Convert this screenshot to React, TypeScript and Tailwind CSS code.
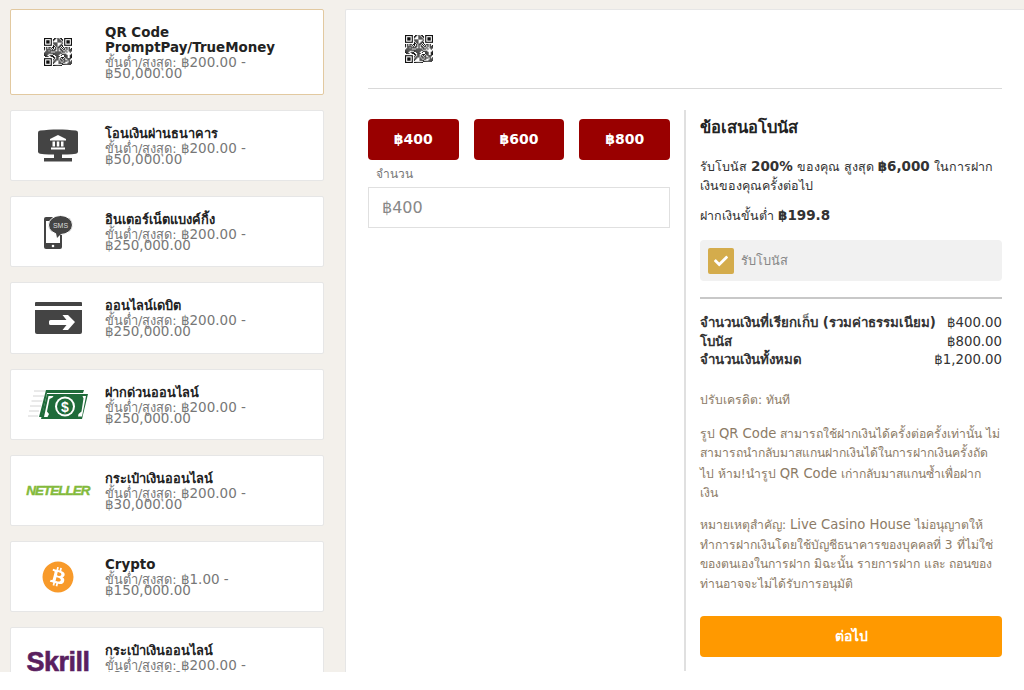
import { FaBitcoin, FaCheck } from "react-icons/fa";

const font = "[font-family:'DejaVu_Sans','Noto_Sans',sans-serif]";

// fixed 25x25 pattern, finder squares get drawn over it
const QrCode = ({ size = 28 }: { size?: number }) => {
  const cells: [number, number][] = [];
  for (let y = 0; y < 25; y++) {
    for (let x = 0; x < 25; x++) {
      const inFinder = (x < 8 && y < 8) || (x > 16 && y < 8) || (x < 8 && y > 16);
      if (inFinder) continue;
      if ((x * 7 + y * 13 + x * y * 3 + (x ^ y)) % 5 < 3) cells.push([x, y]);
    }
  }
  const finder = (x: number, y: number) => (
    <g key={`${x}-${y}`}>
      <rect x={x + 0.5} y={y + 0.5} width="6" height="6" fill="none" stroke="#111" />
      <rect x={x + 2} y={y + 2} width="3" height="3" fill="#111" />
    </g>
  );
  return (
    <svg width={size} height={size} viewBox="0 0 25 25">
      {cells.map(([x, y]) => (
        <rect key={`${x}:${y}`} x={x} y={y} width="1" height="1" fill="#111" />
      ))}
      {finder(0, 0)}
      {finder(18, 0)}
      {finder(0, 18)}
    </svg>
  );
};

const BankIcon = () => (
  <svg width="40" height="33" viewBox="0 0 40 33">
    <path d="M2 1.500c11-1.500 25-1.500 36 0q2 .3 2 2v19q0 2-2 2.300c-11 1.200-25 1.200-36 0q-2-.3-2-2.300v-19q0-1.700 2-2z" fill="#444" />
    <path d="M16 25h8v4h-8z" fill="#444" />
    <path d="M6 29h28v3.500h-28z" fill="#444" />
    <path d="M20 6l8 4v1.500h-16v-1.500z M13 18.500h14v2h-14z M14.500 12.500h2.500v5h-2.500z M18.800 12.500h2.500v5h-2.500z M23 12.500h2.500v5h-2.500z" fill="#fff" />
  </svg>
);

const SmsIcon = () => (
  <svg width="30" height="34" viewBox="0 0 30 34">
    <rect x="1" y="2" width="18" height="32" rx="2" fill="#444" />
    <rect x="3" y="6" width="14" height="22" fill="#fff" />
    <circle cx="10" cy="31" r="1.300" fill="#fff" />
    <ellipse cx="17.500" cy="10" rx="12" ry="9.500" fill="#444" stroke="#fff" strokeWidth="1" />
    <path d="M13 18l1 5 5-5z" fill="#444" />
    <text x="17.500" y="12.500" textAnchor="middle" fontSize="7" fill="#ddd" fontFamily="Liberation Sans">SMS</text>
  </svg>
);

const DebitIcon = () => (
  <svg width="47" height="32" viewBox="0 0 47 32">
    <path d="M1 0h45a1 1 0 0 1 1 1v3h-47v-3a1 1 0 0 1 1-1z" fill="#444" />
    <path d="M0 8h47v22a2 2 0 0 1-2 2h-43a2 2 0 0 1-2-2z" fill="#444" />
    <path d="M14 19.500a1.500 1.500 0 0 1 1.500-1.500h16l-4-5h5.500l7 7-7 8h-5.500l4-5h-16a1.500 1.500 0 0 1-1.500-1.500z" fill="#fff" />
  </svg>
);

const CashIcon = () => (
  <svg width="60" height="29" viewBox="0 0 60 29">
    <path d="M6 1h12M5 6h11M3.500 11h11M2 16h11M1 21h10M0 26h10" stroke="#d4d4d4" strokeWidth="1" />
    <path d="M18 0h38l-1 3h-36l-5 24h-3z" fill="#1f6b3a" />
    <path d="M19 4h41l-6 25h-41z" fill="#1f6b3a" />
    <path d="M20.500 6h5l-1 1.500-3 1.500-2.500 12.500 2 2.500-1.500 3h-3.500z" fill="#fff" />
    <path d="M58 6h-3.500l1 2.500 0 0-2 13-3 2.500-.5 2.500h4z" fill="#fff" />
    <circle cx="37" cy="16.500" r="10" fill="#fff" />
    <circle cx="37" cy="16.500" r="8" fill="#1f6b3a" />
    <text x="37" y="21.500" textAnchor="middle" fontSize="14" fontWeight="bold" fill="#fff" fontFamily="Liberation Sans">$</text>
  </svg>
);

const BitcoinIcon = () => (
  <div className="relative w-[32px] h-[32px] rounded-full bg-white">
    <FaBitcoin className="absolute inset-0 text-[#f89a2a]" size={32} />
  </div>
);

const NetellerLogo = () => (
  <span className="text-[13.500px] leading-none font-bold italic tracking-[-1px] text-[#83ba3b] [-webkit-text-stroke:0.4px_#83ba3b] [font-family:'Liberation_Sans',sans-serif]">
    NETELLER
  </span>
);

const SkrillLogo = () => (
  <span className="text-[27px] leading-none font-bold tracking-[-0.5px] text-[#5a1f5f] [-webkit-text-stroke:0.6px_#5a1f5f] [font-family:'Liberation_Sans',sans-serif]">
    Skrill
  </span>
);

const methods = [
  { name: "QR Code PromptPay/TrueMoney", limit: "฿200.00 - ฿50,000.00", icon: <QrCode />, active: true, latin: true },
  { name: "โอนเงินผ่านธนาคาร", limit: "฿200.00 - ฿50,000.00", icon: <BankIcon /> },
  { name: "อินเตอร์เน็ตแบงค์กิ้ง", limit: "฿200.00 - ฿250,000.00", icon: <SmsIcon /> },
  { name: "ออนไลน์เดบิต", limit: "฿200.00 - ฿250,000.00", icon: <DebitIcon /> },
  { name: "ฝากด่วนออนไลน์", limit: "฿200.00 - ฿250,000.00", icon: <CashIcon /> },
  { name: "กระเป๋าเงินออนไลน์", limit: "฿200.00 - ฿30,000.00", icon: <NetellerLogo /> },
  { name: "Crypto", limit: "฿1.00 - ฿150,000.00", icon: <BitcoinIcon />, latin: true },
  { name: "กระเป๋าเงินออนไลน์", limit: "฿200.00 - ฿30,000.00", icon: <SkrillLogo /> },
];

export default function App() {
  return (
    <div className={`h-[672px] overflow-hidden bg-[#f3f0eb] flex ${font}`}>
      <div className="w-[345px] shrink-0 pt-[9px] pl-[10px] pr-[21px]">
        {methods.map((m, i) => (
          <div
            key={i}
            className={`flex items-center bg-white rounded-[2px] border mb-[15px] ${
              m.active ? "border-[#e2c9a0] h-[86px]" : "border-[#e6e6e6] h-[71.200px]"
            }`}
          >
            <div className="w-[94px] shrink-0 flex justify-center">{m.icon}</div>
            <div className="w-[190px]">
              <div className={`leading-[15px] font-bold text-[#222] ${m.latin ? "text-[13.400px]" : "text-[12.800px]"}`}>
                {m.name}
              </div>
              <div className="text-[13.500px] leading-[11px] text-[#777] pt-[2px]">
                <span className="text-[12.800px]">ขั้นต่ำ/สูงสุด:</span> {m.limit}
              </div>
            </div>
          </div>
        ))}
      </div>

      <div className="flex-1 min-w-0 mt-[9px] bg-white border-t border-l border-[#e6e6e6] rounded-tl-[2px] pl-[22px] pr-[22px]">
        <div className="h-[79px] border-b border-[#d9d9d9] pt-[25px] pl-[37px]">
          <QrCode />
        </div>
        <div className="flex mt-[21px]">
          <div className="w-[302px] shrink-0 pt-[9px]">
            <div className="flex gap-[15px]">
              {["฿400", "฿600", "฿800"].map((a) => (
                <button
                  key={a}
                  className="flex-1 h-[41px] rounded-[4px] bg-[#990000] text-white text-[14px] font-bold"
                >
                  {a}
                </button>
              ))}
            </div>
            <div className="text-[12px] leading-[14px] text-[#777] pl-[8px] mt-[7px]">จำนวน</div>
            <div className="h-[41px] mt-[6px] border border-[#e0e0e0] flex items-center pl-[13px] text-[16px] text-[#888]">
              ฿400
            </div>
          </div>

          <div className="ml-[14px] flex-1 h-[561px] border-l-2 border-[#e0e0e0] pl-[14px]">
            <div className="w-[302px]">
              <h2 className="text-[16.500px] leading-[20px] font-bold text-[#222] mt-[8px]">ข้อเสนอโบนัส</h2>
              <p className="text-[12.500px] leading-[19px] text-[#333] mt-[19px]">
                รับโบนัส <b className="text-[13.500px]">200%</b> ของคุณ สูงสุด <b className="text-[13.500px]">฿6,000</b> ในการฝากเงินของคุณครั้งต่อไป
              </p>
              <p className="text-[12.500px] leading-[19px] text-[#333] mt-[11px]">
                ฝากเงินขั้นต่ำ <b className="text-[13.500px]">฿199.8</b>
              </p>
              <div className="h-[41px] mt-[15px] rounded-[4px] bg-[#f1f1f1] flex items-center pl-[8px]">
                <span className="w-[26px] h-[26px] rounded-[2px] bg-[#d4ac4c] flex items-center justify-center">
                  <FaCheck className="text-white" size={14} />
                </span>
                <span className="ml-[7px] text-[12.800px] text-[#888]">รับโบนัส</span>
              </div>
              <div className="mt-[16px] border-t-2 border-[#c8c8c8] pt-[15px]">
                <div className="flex justify-between text-[13.300px] leading-[18.500px] font-bold text-[#333]">
                  <span>จำนวนเงินที่เรียกเก็บ (รวมค่าธรรมเนียม)</span>
                  <span className="font-normal">฿400.00</span>
                </div>
                <div className="flex justify-between text-[13.300px] leading-[18.500px] font-bold text-[#333]">
                  <span>โบนัส</span>
                  <span className="font-normal">฿800.00</span>
                </div>
                <div className="flex justify-between text-[13.300px] leading-[18.500px] font-bold text-[#333]">
                  <span>จำนวนเงินทั้งหมด</span>
                  <span className="font-normal">฿1,200.00</span>
                </div>
              </div>
              <div className="text-[12.200px] leading-[19.600px] text-[#8c7b66]">
                <p className="mt-[21px]">ปรับเครดิต: ทันที</p>
                <p className="mt-[13.500px]">
                  รูป <span className="text-[13.200px]">QR Code</span> สามารถใช้ฝากเงินได้ครั้งต่อครั้งเท่านั้น ไม่สามารถนำกลับมาสแกนฝากเงินได้ในการฝากเงินครั้งถัด<br />ไป ห้าม!นำรูป <span className="text-[13.200px]">QR Code</span> เก่ากลับมาสแกนซ้ำเพื่อฝาก<br />เงิน
                </p>
                <p className="mt-[11px]">
                  หมายเหตุสำคัญ: <span className="text-[13.200px]">Live Casino House</span> ไม่อนุญาตให้ทำการฝากเงินโดยใช้บัญชีธนาคารของบุคคลที่ 3 ที่ไม่ใช่ของตนเองในการฝาก มิฉะนั้น รายการฝาก และ ถอนของท่านอาจจะไม่ได้รับการอนุมัติ
                </p>
              </div>
              <button className="w-full h-[41px] mt-[22px] rounded-[4px] bg-[#ff9900] text-white text-[14px] font-bold">
                ต่อไป
              </button>
            </div>
          </div>
        </div>
      </div>
    </div>
  );
}
